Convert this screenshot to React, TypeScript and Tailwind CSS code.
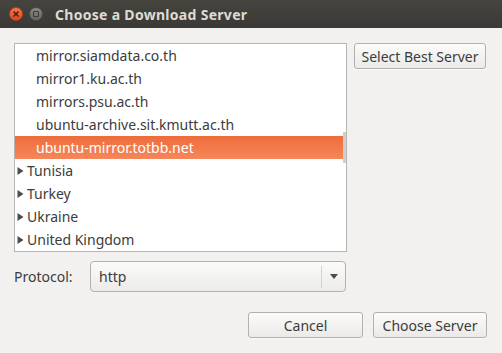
const servers = [
  "mirror.siamdata.co.th",
  "mirror1.ku.ac.th",
  "mirrors.psu.ac.th",
  "ubuntu-archive.sit.kmutt.ac.th",
];

const countries = ["Tunisia", "Turkey", "Ukraine", "United Kingdom"];

function Expander() {
  return (
    <svg width="7" height="10" viewBox="0 0 7 10" className="shrink-0">
      <path d="M0.5 1 L6.5 5 L0.5 9 Z" fill="#4c4c4c" />
    </svg>
  );
}

function GtkButton({ label, className }: { label: string; className?: string }) {
  return (
    <button
      className={
        "h-[26px] rounded-[3px] border border-[#b3b1ad] bg-gradient-to-b from-[#fbfbfa] to-[#ebeae8] text-[14px] text-[#3c3c3c] shadow-[0_1px_0_rgba(255,255,255,0.6)] " +
        (className ?? "")
      }
    >
      {label}
    </button>
  );
}

export default function App() {
  return (
    <div
      className="flex h-[353px] w-[502px] flex-col overflow-hidden bg-[#f2f1f0] text-[#3c3c3c]"
      style={{ fontFamily: '"Noto Sans", "Open Sans", sans-serif' }}
    >
      {/* title bar */}
      <div className="flex h-[28px] shrink-0 items-center bg-gradient-to-b from-[#45443f] to-[#3a3935] pl-[9px]">
        <div className="flex h-[14px] w-[14px] items-center justify-center rounded-full border border-[#b9401f] bg-gradient-to-b from-[#f2754a] to-[#e0461c]">
          <svg width="6" height="6" viewBox="0 0 6 6">
            <path d="M0.5 0.5 L5.5 5.5 M5.5 0.5 L0.5 5.5" stroke="#3b1a10" strokeWidth="1.3" />
          </svg>
        </div>
        <div className="ml-[6px] flex h-[14px] w-[14px] items-center justify-center rounded-full border border-[#4d4c47] bg-gradient-to-b from-[#8a8983] to-[#66655f]">
          <div className="h-[6px] w-[6px] rounded-[1px] border-[1.5px] border-[#3a3935]" />
        </div>
        <div className="ml-[12px] text-[14px] font-bold tracking-[0.3px] text-[#dfdbd2]">
          Choose a Download Server
        </div>
      </div>

      <div className="flex flex-col px-[14px] pt-[15px]">
        <div className="flex items-start">
          {/* tree list */}
          <div className="relative h-[209px] w-[333px] border border-[#b6b5b1] bg-white">
            <div className="flex flex-col">
              {servers.map((s) => (
                <div key={s} className="flex h-[23px] items-center pl-[21px] text-[14px]">
                  {s}
                </div>
              ))}
              <div className="flex h-[23px] w-[329px] items-center bg-gradient-to-b from-[#ee6c3b] to-[#f5875a] pl-[21px] text-[14px] text-white">
                ubuntu-mirror.totbb.net
              </div>
              {countries.map((c) => (
                <div key={c} className="flex h-[23px] items-center gap-[3px] pl-[2px] text-[14px]">
                  <Expander />
                  {c}
                </div>
              ))}
            </div>
            <div className="absolute right-0 top-[88px] h-[31px] w-[3px] bg-[#cfcfcd]" />
          </div>
          <GtkButton label="Select Best Server" className="ml-[7px] w-[132px]" />
        </div>

        {/* protocol */}
        <div className="mt-[9px] flex items-center">
          <div className="w-[76px] text-[14px]">Protocol:</div>
          <div className="flex h-[31px] w-[256px] items-center rounded-[4px] border border-[#b3b1ad] bg-gradient-to-b from-[#fbfbfa] to-[#ecebe9]">
            <div className="flex-1 pl-[8px] text-[14px]">http</div>
            <div className="h-[22px] w-px bg-[#d4d3d0]" />
            <div className="flex w-[23px] justify-center">
              <svg width="8" height="5" viewBox="0 0 8 5">
                <path d="M0 0 L8 0 L4 5 Z" fill="#4c4c4c" />
              </svg>
            </div>
          </div>
        </div>

        {/* actions */}
        <div className="mt-[20px] flex justify-end gap-[10px] pr-[1px]">
          <GtkButton label="Cancel" className="w-[115px]" />
          <GtkButton label="Choose Server" className="w-[114px]" />
        </div>
      </div>
    </div>
  );
}
